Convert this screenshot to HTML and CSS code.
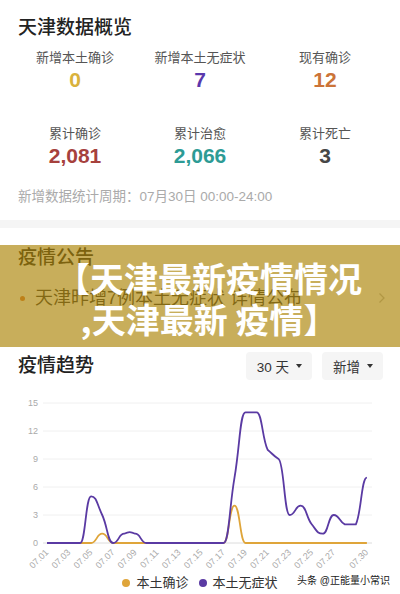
FILE: index.html
```html
<!DOCTYPE html>
<html lang="zh-CN">
<head>
    <meta charset="UTF-8">
    <meta name="viewport" content="width=device-width, initial-scale=1.0">
    <title>天津疫情数据</title>
    <link rel="stylesheet" href="styles.css">
</head>
<body>
    <section class="card overview">
        <h2 class="title">天津数据概览</h2>
        <div class="stats">
            <div class="stat">
                <div class="stat-label">新增本土确诊</div>
                <div class="stat-value gold">0</div>
            </div>
            <div class="stat">
                <div class="stat-label">新增本土无症状</div>
                <div class="stat-value purple">7</div>
            </div>
            <div class="stat">
                <div class="stat-label">现有确诊</div>
                <div class="stat-value orange">12</div>
            </div>
            <div class="stat">
                <div class="stat-label">累计确诊</div>
                <div class="stat-value red">2,081</div>
            </div>
            <div class="stat">
                <div class="stat-label">累计治愈</div>
                <div class="stat-value teal">2,066</div>
            </div>
            <div class="stat">
                <div class="stat-label">累计死亡</div>
                <div class="stat-value gray">3</div>
            </div>
        </div>
        <p class="period">新增数据统计周期：07月30日 00:00-24:00</p>
    </section>

    <div class="divider"></div>

    <section class="card notice">
        <h2 class="title">疫情公告</h2>
        <div class="notice-row">
            <span class="dot"></span>
            <span class="notice-text">天津昨增7例本土无症状 详情公布</span>
            <svg class="chevron" width="8" height="12" viewBox="0 0 8 12"><path d="M1.5 1.5 L6 6 L1.5 10.5" fill="none" stroke="#bbb" stroke-width="1.3"/></svg>
        </div>
        <div class="banner">【天津最新疫情情况<br>,天津最新 疫情】</div>
    </section>

    <section class="trend">
        <div class="trend-head">
            <h2 class="title">疫情趋势</h2>
            <div class="filters">
                <button class="filter">30 天 <i class="caret"></i></button>
                <button class="filter">新增 <i class="caret"></i></button>
            </div>
        </div>

        <svg class="chart" width="400" height="190" viewBox="0 380 400 190">
            <!-- 网格线 -->
            <g class="grid">
                <line x1="43" y1="403" x2="372" y2="403"/>
                <line x1="43" y1="431" x2="372" y2="431"/>
                <line x1="43" y1="459" x2="372" y2="459"/>
                <line x1="43" y1="487" x2="372" y2="487"/>
                <line x1="43" y1="515" x2="372" y2="515"/>
                <line class="base" x1="43" y1="543" x2="372" y2="543"/>
            </g>
            <g class="axis-y">
                <text x="38" y="406">15</text>
                <text x="38" y="434">12</text>
                <text x="38" y="462">9</text>
                <text x="38" y="490">6</text>
                <text x="38" y="518">3</text>
                <text x="38" y="546">0</text>
            </g>
            <g class="axis-x">
                <text x="49" y="553" transform="rotate(-45 49 553)">07.01</text>
                <text x="71.1" y="553" transform="rotate(-45 71.1 553)">07.03</text>
                <text x="93.1" y="553" transform="rotate(-45 93.1 553)">07.05</text>
                <text x="115.2" y="553" transform="rotate(-45 115.2 553)">07.07</text>
                <text x="137.2" y="553" transform="rotate(-45 137.2 553)">07.09</text>
                <text x="159.3" y="553" transform="rotate(-45 159.3 553)">07.11</text>
                <text x="181.4" y="553" transform="rotate(-45 181.4 553)">07.13</text>
                <text x="203.4" y="553" transform="rotate(-45 203.4 553)">07.15</text>
                <text x="225.5" y="553" transform="rotate(-45 225.5 553)">07.17</text>
                <text x="247.5" y="553" transform="rotate(-45 247.5 553)">07.19</text>
                <text x="269.6" y="553" transform="rotate(-45 269.6 553)">07.21</text>
                <text x="291.7" y="553" transform="rotate(-45 291.7 553)">07.23</text>
                <text x="313.7" y="553" transform="rotate(-45 313.7 553)">07.25</text>
                <text x="335.8" y="553" transform="rotate(-45 335.8 553)">07.27</text>
                <text x="368.9" y="553" transform="rotate(-45 368.9 553)">07.30</text>
            </g>
            <!-- 本土确诊 -->
            <path class="line line-confirmed" d="M47 543 L91.1 543 C96.6 543 96.7 533.7 102.2 533.7 C107.7 533.7 107.7 543 113.2 543 L223.5 543 C229 543 229 505.7 234.5 505.7 C240 505.7 240 543 245.5 543 L366.9 543"/>
            <!-- 本土无症状 -->
            <path class="line line-asymp" d="M47 543 L80.1 543 C85.6 543 85.6 496.3 91.1 496.3 C96.6 496.3 96.7 503.3 102.2 515 C107.7 526.7 107.7 543 113.2 543 C118.7 543 118.7 533.7 124.2 533.7 C128.7 531.5 130.7 531.5 135.2 533.7 C140.7 533.7 140.8 543 146.3 543 L223.5 543 C229 543 229 510.3 234.5 477.7 C240 445 240 412.3 245.5 412.3 L256.6 412.3 C262.1 412.3 262.1 438 267.6 449.7 C273.1 454.4 273.1 455.5 278.6 459 C284.1 462.5 284.2 515 289.7 515 C295.2 515 295.2 505.7 300.7 505.7 C306.2 505.7 306.2 517.3 311.7 524.3 C317.2 531.3 317.3 533.7 322.8 533.7 C328.3 533.7 328.3 515 333.8 515 C339.3 515 339.3 522 344.8 524.3 C350.3 524.3 350.4 524.3 355.9 524.3 C361.4 512.7 361.4 477.7 366.9 477.7"/>
        </svg>

        <div class="legend">
            <span class="legend-item"><i class="legend-dot confirmed"></i>本土确诊</span>
            <span class="legend-item"><i class="legend-dot asymp"></i>本土无症状</span>
        </div>
        <span class="watermark">头条 @正能量小常识</span>
    </section>
</body>
</html>
```

FILE: styles.css
```css
body {
    margin: 0;
    width: 400px;
    font-family: "Liberation Sans", "Noto Sans CJK SC", sans-serif;
    color: #333;
    background: #fff;
}

.card {
    padding: 15px 18px 14px;
}

.title {
    margin: 0;
    font-size: 19px;
    line-height: 26px;
    font-weight: 500;
    color: #222;
}

/* 数据概览 */
.stats {
    display: grid;
    grid-template-columns: repeat(3, 1fr);
    row-gap: 32px;
    margin: 8px -5.5px 0;
}

.stat {
    text-align: center;
}

.stat-label {
    font-size: 13px;
    line-height: 18px;
    color: #555;
}

.stat-value {
    font-size: 21px;
    line-height: 26px;
    font-weight: bold;
}

.gold { color: #d9b23c; }
.purple { color: #5a38ad; }
.orange { color: #cc7438; }
.red { color: #a6413d; }
.teal { color: #2d9b95; }
.gray { color: #464646; }

.period {
    margin: 19px 0 0;
    font-size: 13.5px;
    line-height: 18px;
    color: #aaa;
}

.divider {
    height: 8px;
    background: #f5f5f5;
}

/* 疫情公告 */
.notice {
    position: relative;
    height: 118px;
    box-sizing: border-box;
    padding-top: 17px;
}

.notice-row {
    display: flex;
    align-items: center;
    margin-top: 15px;
    font-size: 18px;
    line-height: 24px;
}

.dot {
    width: 5px;
    height: 5px;
    border-radius: 50%;
    background: #e07a3c;
    margin: 0 10px 0 2px;
}

.chevron {
    margin-left: auto;
    margin-right: -4px;
}

.banner {
    position: absolute;
    left: 0;
    right: 0;
    top: 17px;
    bottom: -1px;
    padding: 12px 0 0 18px;
    background: rgba(172, 132, 6, 0.66);
    color: #fff;
    font-family: "Noto Sans CJK SC", sans-serif;
    font-size: 34px;
    font-weight: bold;
    line-height: 41px;
    text-align: center;
}

/* 疫情趋势 */
.trend {
    position: relative;
    padding-top: 6px;
}

.trend-head {
    display: flex;
    align-items: center;
    justify-content: space-between;
    height: 28px;
    padding: 0 17px 0 18px;
}

.filters {
    display: flex;
    gap: 10px;
}

.filter {
    display: flex;
    align-items: center;
    gap: 7px;
    height: 28px;
    padding: 0 10px 0 11px;
    border: none;
    border-radius: 4px;
    background: #f5f5f5;
    font-family: "Liberation Sans", "Noto Sans CJK SC", sans-serif;
    font-size: 13.5px;
    color: #333;
}

.caret {
    width: 0;
    height: 0;
    border-left: 3.5px solid transparent;
    border-right: 3.5px solid transparent;
    border-top: 4px solid #333;
}

.chart {
    display: block;
}

.grid line {
    stroke: #f0f0f0;
    stroke-width: 1;
}

.grid .base {
    stroke: #dcdcdc;
}

.axis-y text,
.axis-x text {
    font-family: "Liberation Sans", sans-serif;
    font-size: 9px;
    fill: #aaa;
    text-anchor: end;
}

.line {
    fill: none;
    stroke-width: 1.8;
    stroke-linejoin: round;
}

.line-confirmed { stroke: #dfa53a; }
.line-asymp { stroke: #5a3aa3; }

.legend {
    display: flex;
    justify-content: center;
    gap: 10px;
    margin-top: 3px;
    font-size: 13px;
    line-height: 20px;
    color: #333;
}

.legend-item {
    display: flex;
    align-items: center;
    gap: 6px;
}

.legend-dot {
    width: 8px;
    height: 8px;
    border-radius: 50%;
}

.legend-dot.confirmed { background: #dfa53a; }
.legend-dot.asymp { background: #5a3aa3; }

.watermark {
    position: absolute;
    right: 10px;
    bottom: 6px;
    font-size: 10px;
    color: #1a1a1a;
    text-shadow: 0 0 2px #fff, 0 0 2px #fff;
}
```
